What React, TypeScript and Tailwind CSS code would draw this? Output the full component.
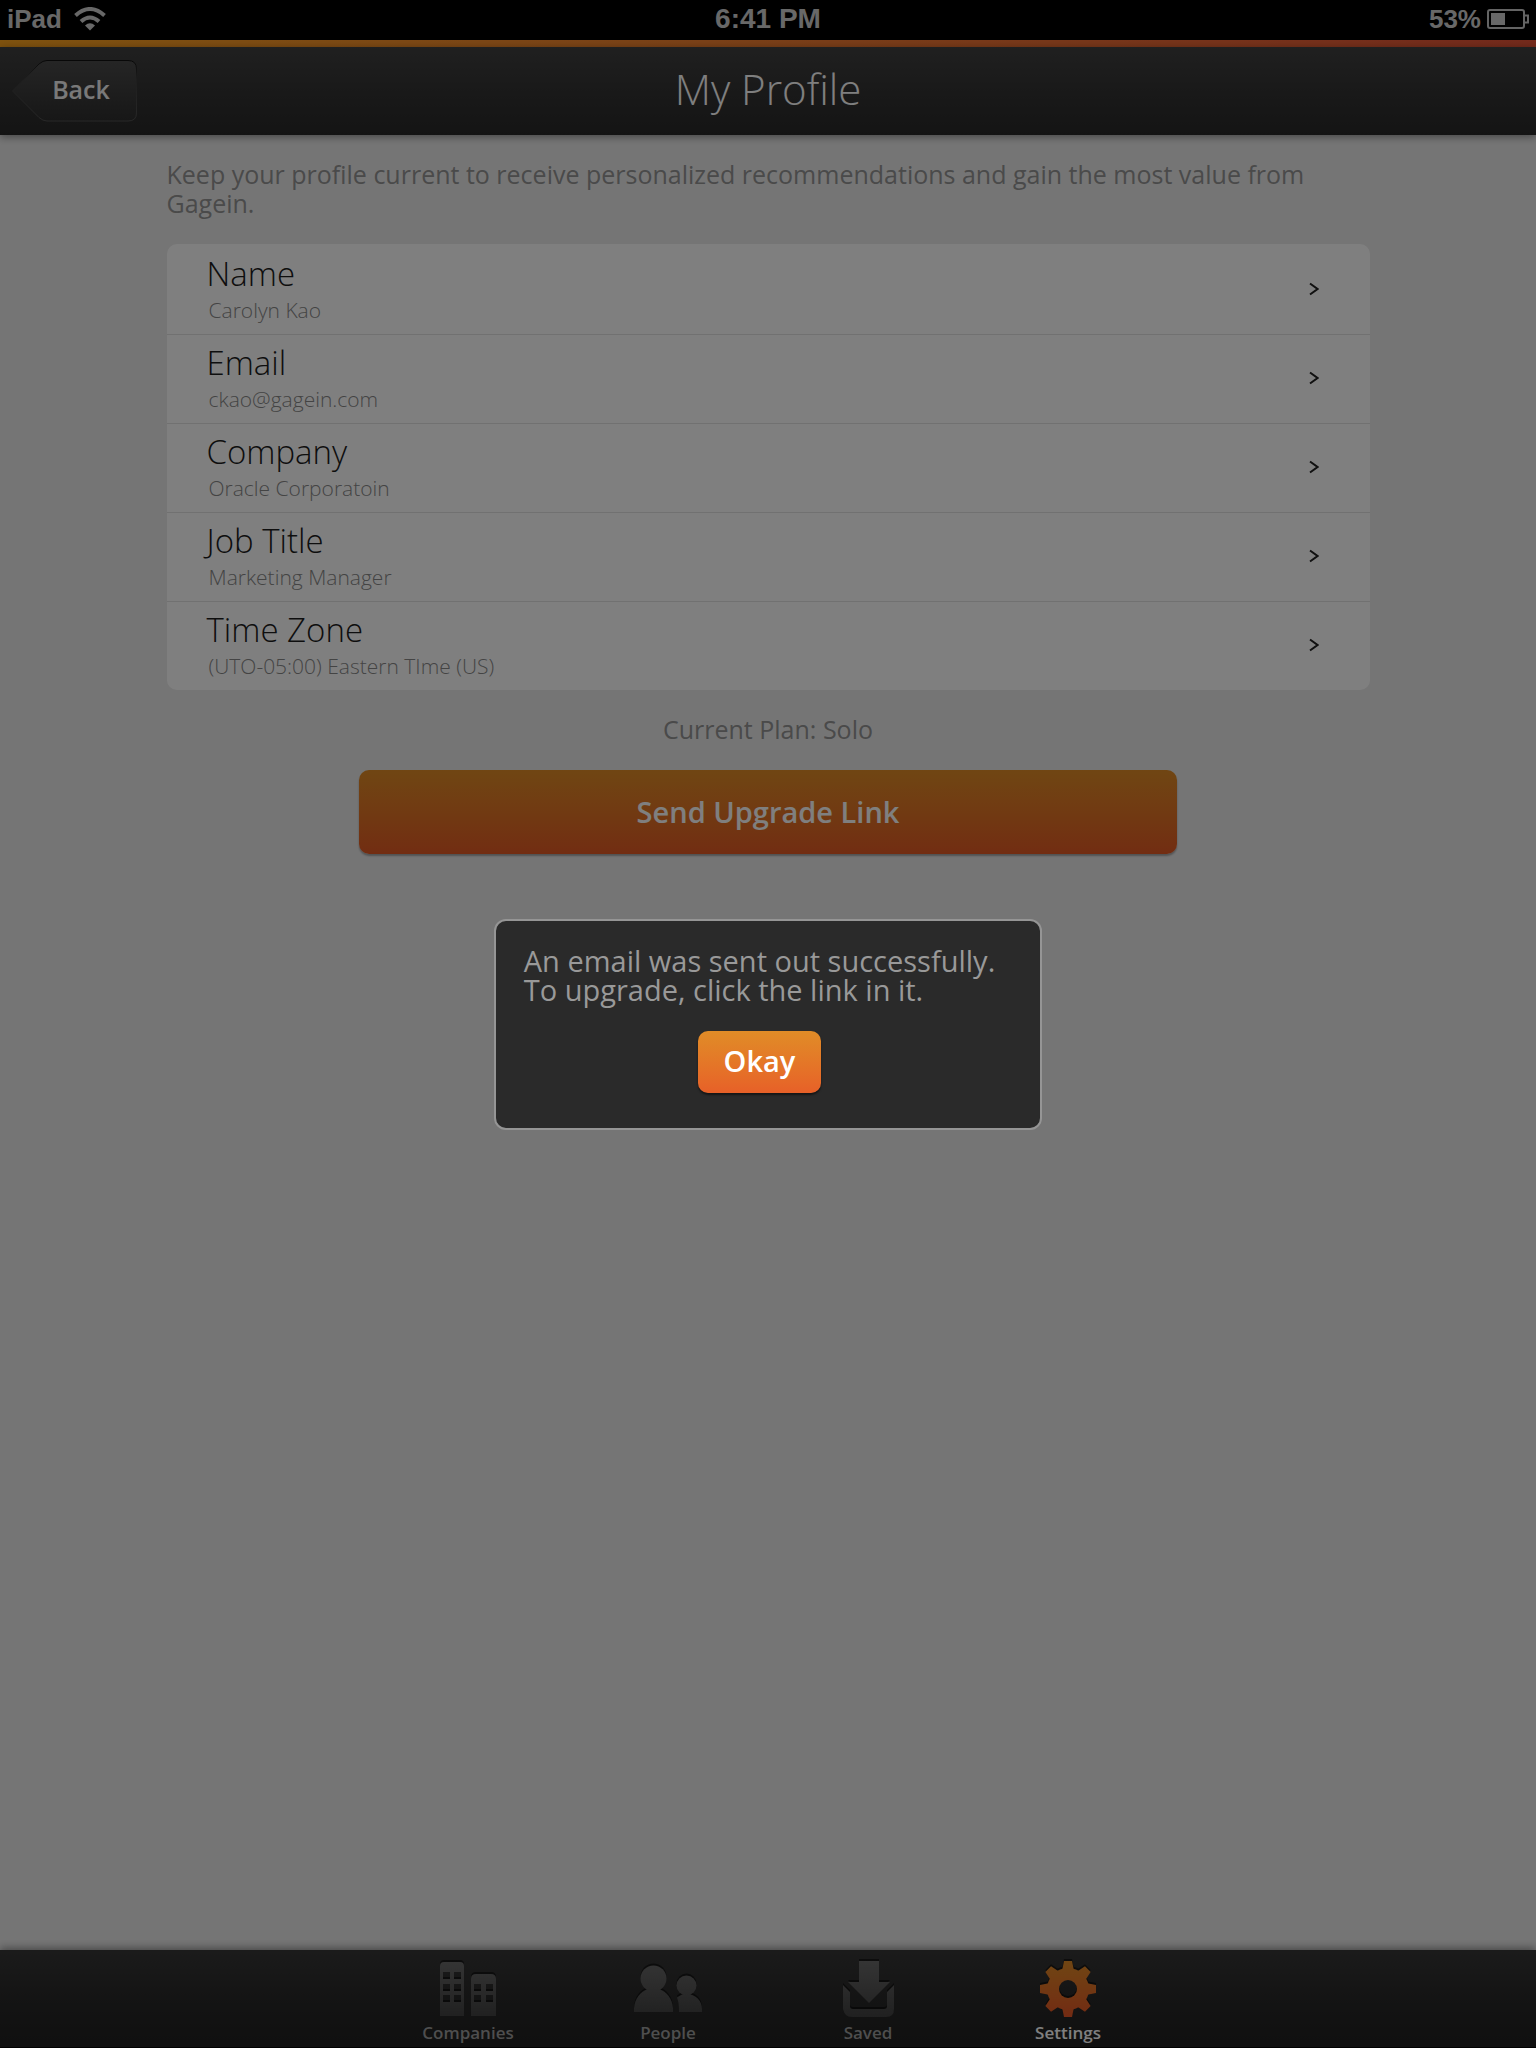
import React from "react";

type Field = { label: string; value: string };

const fields: Field[] = [
  { label: "Name", value: "Carolyn Kao" },
  { label: "Email", value: "ckao@gagein.com" },
  { label: "Company", value: "Oracle Corporatoin" },
  { label: "Job Title", value: "Marketing Manager" },
  { label: "Time Zone", value: "(UTO-05:00) Eastern TIme (US)" },
];

const iconClass = "h-[56px] w-[80px] overflow-visible drop-shadow-[0_-2px_0_rgba(0,0,0,0.5)]";

function GreyGradient({ id }: { id: string }) {
  return (
    <defs>
      <linearGradient id={id} gradientUnits="userSpaceOnUse" x1="0" y1="0" x2="0" y2="56">
        <stop offset="0" stopColor="#6a6a6a" />
        <stop offset="1" stopColor="#414141" />
      </linearGradient>
    </defs>
  );
}

function CompaniesIcon() {
  return (
    <svg viewBox="0 0 80 56" className={iconClass} aria-hidden="true">
      <GreyGradient id="companies-fill" />
      <path
        fill="url(#companies-fill)"
        fillRule="evenodd"
        d="M12 55V5q0-4 4-4h16q4 0 4 4v50zM15 11v7h7v-7zM26 11v7h7v-7zM15 23v7h7v-7zM26 23v7h7v-7zM15 34v7h7v-7zM26 34v7h7v-7zM43 55V18q0-5 5-5h15q5 0 5 5v37zM46 23v7h7v-7zM58 23v7h7v-7zM46 34v7h7v-7zM58 34v7h7v-7z"
      />
    </svg>
  );
}

function PeopleIcon() {
  return (
    <svg viewBox="0 0 80 56" className={iconClass} aria-hidden="true">
      <GreyGradient id="people-fill" />
      <g fill="url(#people-fill)">
        <circle cx="25.5" cy="17.5" r="13" />
        <path d="M6 51V47C7 37 12 31 20 28h11c8 3 13 9 14 19v4z" />
        <circle cx="58.5" cy="24.5" r="10" />
        <path d="M51 51C51 45 50.500 40 49 36.500C52 34 55 33 58.500 33C68 33 74 40 74 48V51z" />
      </g>
    </svg>
  );
}

function SavedIcon() {
  return (
    <svg viewBox="0 0 80 56" className={iconClass} aria-hidden="true">
      <GreyGradient id="saved-fill" />
      <g fill="url(#saved-fill)">
        <path d="M31 0h20v21h11L41 42 20 21h11z" />
        <path d="M15 24l7 7v14q0 3 3 3h31q3 0 3-3V31l7-7v24q0 4-2 6t-6 2H24q-4 0-6-2t-3-6z" />
      </g>
    </svg>
  );
}

function SettingsIcon() {
  return (
    <svg viewBox="0 0 80 56" className={iconClass} aria-hidden="true">
      <defs>
        <linearGradient id="gear-fill" x1="0" y1="0" x2="0" y2="1">
          <stop offset="0" stopColor="#e08c26" />
          <stop offset="1" stopColor="#e65626" />
        </linearGradient>
        <mask id="gear-mask" maskUnits="userSpaceOnUse" x="10" y="-2" width="60" height="60">
          <g fill="white" transform="translate(40 28)">
            <circle r="21" />
            {[0, 45, 90, 135, 180, 225, 270, 315].map((angle) => (
              <path key={angle} d="M-4-28H4L5.500-20.500L7-18H-7L-5.500-20.500z" transform={`rotate(${angle})`} />
            ))}
          </g>
          <circle cx="40" cy="28" r="9" fill="black" />
        </mask>
      </defs>
      <rect x="12" y="0" width="56" height="56" fill="url(#gear-fill)" mask="url(#gear-mask)" />
    </svg>
  );
}

const tabs = [
  { name: "Companies", Icon: CompaniesIcon, active: false },
  { name: "People", Icon: PeopleIcon, active: false },
  { name: "Saved", Icon: SavedIcon, active: false },
  { name: "Settings", Icon: SettingsIcon, active: true },
];

function StatusBar() {
  return (
    <div className="grid h-10 grid-cols-3 items-center bg-black px-[7px] pb-[3px] font-['Liberation_Sans',Arial,sans-serif] text-[26px] leading-[36px] font-bold text-[#d0d0d0]">
      <div className="flex items-center gap-3">
        <span>iPad</span>
        <svg viewBox="0 0 32 24" className="h-6 w-8" aria-label="Wi-Fi" role="img">
          <g fill="none" stroke="#d0d0d0" strokeWidth="4">
            <path d="M1.500 8.500Q16-4.500 30.500 8.500" />
            <path d="M7 14.500Q16 6.500 25 14.500" />
          </g>
          <path d="M11 18.500Q16 14 21 18.500L16 23.500z" fill="#d0d0d0" />
        </svg>
      </div>
      <span className="text-center text-[28px]">6:41 PM</span>
      <div className="flex items-center justify-end gap-[6px]">
        <span>53%</span>
        <svg viewBox="0 0 42 20" className="h-5 w-[42px]" aria-label="Battery" role="img">
          <rect x="1" y="1" width="36" height="18" rx="2" fill="none" stroke="#c8c8c8" strokeWidth="2" />
          <path d="M38 6.500h3v7h-3" fill="none" stroke="#c8c8c8" strokeWidth="2" />
          <rect x="4" y="4" width="14" height="12" fill="#d0d0d0" />
        </svg>
      </div>
    </div>
  );
}

function Header() {
  return (
    <header className="relative z-10 grid h-[88px] grid-cols-[1fr_auto_1fr] items-center bg-linear-to-b from-[#404040] via-[#333333] to-[#292929] shadow-[0_2px_8px_rgba(0,0,0,0.4)]">
      <button type="button" className="relative ml-3 h-[62px] w-[126px] pb-1 pl-3 text-[25px] leading-[36px] font-semibold text-[#f2f2f2]">
        <svg viewBox="0 0 126 62" className="absolute inset-0 h-full w-full" aria-hidden="true">
          <defs>
            <linearGradient id="back-fill" x1="0" y1="0" x2="0" y2="1">
              <stop offset="0" stopColor="#4b4b4b" />
              <stop offset="1" stopColor="#2e2e2e" />
            </linearGradient>
            <linearGradient id="back-edge" x1="0" y1="0" x2="0" y2="1">
              <stop offset="0" stopColor="#101010" />
              <stop offset="0.3" stopColor="#3c3c3c" />
              <stop offset="1" stopColor="#505050" />
            </linearGradient>
          </defs>
          <path
            d="M.5 31L27 4Q31 .5 35 .5H116Q124.500 .5 124.500 9V53Q124.500 61 116 61H35Q31 61 27 57.500z"
            fill="url(#back-fill)"
            stroke="url(#back-edge)"
          />
        </svg>
        <span className="relative">Back</span>
      </button>
      <h1 className="pb-1 text-[42px] leading-[56px] font-light text-white">My Profile</h1>
    </header>
  );
}

function ProfileList() {
  return (
    <ul className="mt-[26px] overflow-hidden rounded-[10px] bg-white pt-0.5">
      {fields.map((field) => (
        <li key={field.label} className="border-b border-[#e2e2e2] last:border-0">
          <button type="button" className="flex w-full items-center justify-between pt-2 pr-[51px] pb-[10px] pl-10 text-left">
            <span className="flex flex-col gap-0.5">
              <span className="text-[33px] leading-[40px] font-light text-[#1c1c1c]">{field.label}</span>
              <span className="pl-0.5 text-[21px] leading-[28px] font-light text-[#888888]">{field.value}</span>
            </span>
            <svg viewBox="0 0 10 14" className="h-[14px] w-[10px]" aria-hidden="true">
              <path d="M1 1.500L8.500 7L1 12.500" fill="none" stroke="#222222" strokeWidth="2" />
            </svg>
          </button>
        </li>
      ))}
    </ul>
  );
}

function TabBar() {
  return (
    <nav className="relative flex h-[98px] justify-center border-b border-black bg-linear-to-b from-[#373737] via-[#282828] to-[#202020] shadow-[0_-2px_8px_rgba(0,0,0,0.4)]">
      {tabs.map(({ name, Icon, active }) => (
        <button
          key={name}
          type="button"
          aria-current={active ? "page" : undefined}
          className={`flex w-[200px] flex-col items-center gap-[3px] pt-[11px] text-[17px] leading-[26px] font-semibold ${active ? "text-white" : "text-[#9c9c9c]"}`}
        >
          <Icon />
          <span>{name}</span>
        </button>
      ))}
    </nav>
  );
}

function UpgradeDialog() {
  return (
    <div className="fixed inset-0 z-20 flex items-center justify-center bg-black/50">
      <div
        role="alertdialog"
        aria-modal="true"
        aria-labelledby="upgrade-message"
        className="flex flex-col items-center rounded-[12px] border-2 border-[#959595] bg-[#2a2a2a] pt-[25px] pr-[45px] pb-[35px] pl-[28px]"
      >
        <p id="upgrade-message" className="text-[29px] leading-[29px] text-[#999999]">
          An email was sent out successfully.
          <br />
          To upgrade, click the link in it.
        </p>
        <button
          type="button"
          className="mt-[27px] rounded-[10px] bg-linear-to-b from-[#e08c27] to-[#e76028] px-[26px] pt-[10px] pb-3 text-[29px] leading-[40px] font-semibold text-white shadow-[0_2px_2px_rgba(0,0,0,0.5)]"
        >
          Okay
        </button>
      </div>
    </div>
  );
}

export default function App() {
  return (
    <div className="flex min-h-screen flex-col bg-[#ebebeb] font-['Open_Sans',sans-serif]">
      <StatusBar />
      <div className="h-[7px] bg-linear-to-r from-[#fea51e] to-[#e85438]" />
      <Header />
      <main className="mx-auto flex w-full max-w-[1203px] flex-1 flex-col pt-[25px] text-[25px] leading-[29px] text-[#949494]">
        <p>Keep your profile current to receive personalized recommendations and gain the most value from Gagein.</p>
        <ProfileList />
        <p className="mt-[25px] text-center">Current Plan: Solo</p>
        <button
          type="button"
          className="mx-auto mt-[26px] w-full max-w-[818px] rounded-[10px] bg-linear-to-b from-[#e08c26] to-[#e45a24] py-[22px] text-[29px] leading-[40px] font-semibold text-white shadow-[0_2px_2px_rgba(0,0,0,0.3)]"
        >
          Send Upgrade Link
        </button>
      </main>
      <TabBar />
      <UpgradeDialog />
    </div>
  );
}
